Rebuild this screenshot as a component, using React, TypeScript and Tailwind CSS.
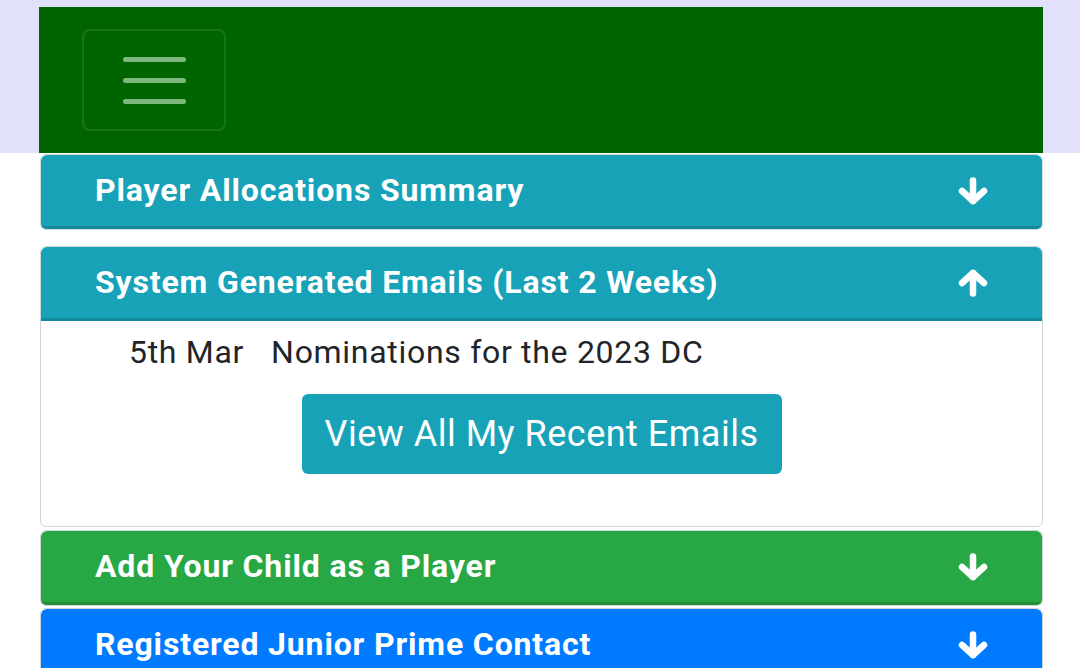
import React from "react";

function ArrowIcon({ up = false }: { up?: boolean }) {
  return (
    <svg
      width="30"
      height="28"
      viewBox="0 0 30 28"
      className={up ? "rotate-180" : ""}
      fill="none"
      stroke="white"
      strokeWidth="6.5"
      strokeLinecap="round"
      strokeLinejoin="round"
    >
      <path d="M15 3.5V24" />
      <path d="M4 14L15 24L26 14" />
    </svg>
  );
}

function CardHeader({
  title,
  color,
  open = false,
}: {
  title: string;
  color: string;
  open?: boolean;
}) {
  return (
    <div
      className={`${color} h-[74px] flex items-center justify-between pl-[54px] pr-[54px] border-b-[3px] border-black/15 rounded-t-[6px]`}
    >
      <h2 className="text-white font-bold text-[32px] leading-none tracking-[0.85px] -mt-px">
        {title}
      </h2>
      <ArrowIcon up={open} />
    </div>
  );
}

export default function App() {
  return (
    <div className="min-h-[668px] bg-white font-['Roboto',sans-serif] text-[#212529] overflow-hidden">
      <div className="bg-[#e1e1fb] h-[153px] pt-[7px]">
        <nav className="bg-[#006400] ml-[39px] w-[1004px] h-[146px] pt-[22px] pl-[43px]">
          <button className="w-[144px] h-[102px] rounded-[8px] border-2 border-white/10 flex flex-col items-center justify-center gap-[16px]">
            <span className="block w-[63px] h-[5px] rounded-full bg-[#7db87d]" />
            <span className="block w-[63px] h-[5px] rounded-full bg-[#7db87d]" />
            <span className="block w-[63px] h-[5px] rounded-full bg-[#7db87d]" />
          </button>
        </nav>
      </div>

      <div className="ml-[40px] w-[1003px] flex flex-col">
        <div className="mt-px rounded-[6px] border border-[#d9dcdf] overflow-hidden">
          <CardHeader title="Player Allocations Summary" color="bg-[#17a2b8]" />
        </div>

        <div className="mt-[16px] rounded-[6px] border-[1.5px] border-[#d3d6d9] overflow-hidden">
          <CardHeader
            title="System Generated Emails (Last 2 Weeks)"
            color="bg-[#17a2b8]"
            open
          />
          <div className="h-[205px] pt-[13px]">
            <div className="flex gap-[27px] pl-[88px] text-[32px] leading-[36px] tracking-[0.7px]">
              <span>5th Mar</span>
              <span>Nominations for the 2023 DC</span>
            </div>
            <div className="flex justify-center mt-[24px]">
              <button className="w-[480px] h-[80px] rounded-[6px] bg-[#17a2b8] text-white text-[36px] leading-none tracking-[0.5px]">
                View All My Recent Emails
              </button>
            </div>
          </div>
        </div>

        <div className="mt-[3px] rounded-[6px] border border-[#d3d6d9] overflow-hidden">
          <CardHeader title="Add Your Child as a Player" color="bg-[#28a745]" />
        </div>

        <div className="mt-[2px] rounded-[6px] border border-[#d3d6d9] overflow-hidden">
          <CardHeader
            title="Registered Junior Prime Contact"
            color="bg-[#007bff]"
          />
        </div>
      </div>
    </div>
  );
}
